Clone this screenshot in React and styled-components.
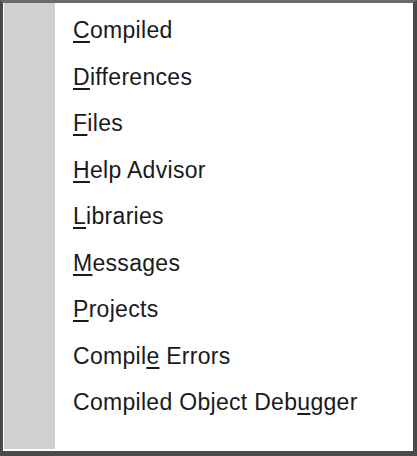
import React from "react";
import styled, { createGlobalStyle } from "styled-components";

const items = [
  { label: "Compiled", key: 0 },
  { label: "Differences", key: 0 },
  { label: "Files", key: 0 },
  { label: "Help Advisor", key: 0 },
  { label: "Libraries", key: 0 },
  { label: "Messages", key: 0 },
  { label: "Projects", key: 0 },
  { label: "Compile Errors", key: 6 },
  { label: "Compiled Object Debugger", key: 19 },
];

function MenuItem({ label, hotkey }) {
  return (
    <ItemStyle>
      {label.slice(0, hotkey)}
      <Hotkey>{label[hotkey]}</Hotkey>
      {label.slice(hotkey + 1)}
    </ItemStyle>
  );
}

export default function App() {
  return (
    <>
      <GlobalStyle />
      <MenuStyle>
        <Gutter />
        <ListStyle>
          {items.map((item) => (
            <MenuItem key={item.label} label={item.label} hotkey={item.key} />
          ))}
        </ListStyle>
      </MenuStyle>
    </>
  );
}

const GlobalStyle = createGlobalStyle`
  html, body {
    margin: 0;
    padding: 0;
    background: #ffffff;
  }
`;

const MenuStyle = styled.div`
  display: flex;
  box-sizing: border-box;
  width: 417px;
  height: 456px;
  border-top: 3px solid #6a6a6a;
  border-left: 3px solid #4a4a4a;
  border-right: 4px solid #4a4a4a;
  border-bottom: 5px solid #4a4a4a;
  background: #ffffff;
`;

const Gutter = styled.div`
  width: 51px;
  margin: 0 0 2px 1px;
  background: #d0d0d0;
`;

const ListStyle = styled.ul`
  list-style: none;
  margin: 0;
  padding: 4px 0 0 18px;
`;

const ItemStyle = styled.li`
  height: 46.5px;
  line-height: 46.5px;
  font-family: "Liberation Sans", Arial, sans-serif;
  font-size: 23px;
  letter-spacing: 0.3px;
  color: #1a1a1a;
  white-space: nowrap;
`;

const Hotkey = styled.span`
  text-decoration: underline;
  text-decoration-thickness: 2px;
  text-underline-offset: 3px;
`;
